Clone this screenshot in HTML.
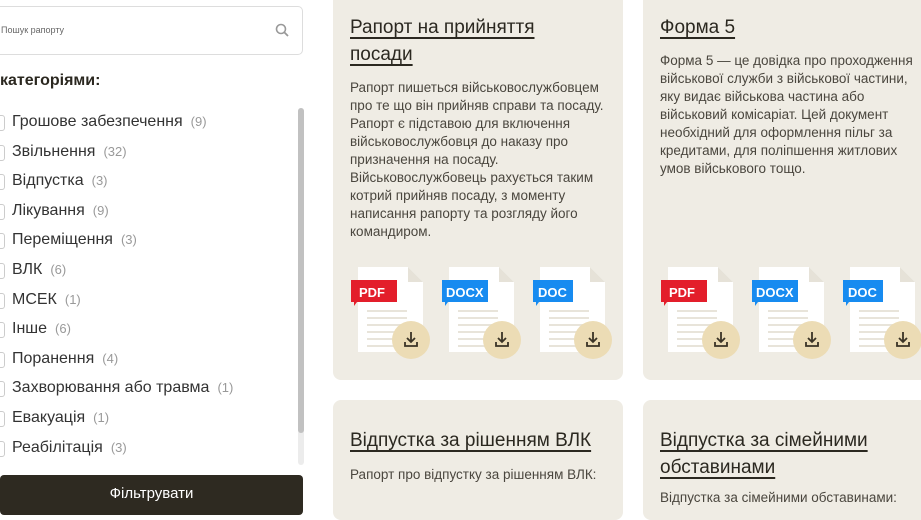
<!DOCTYPE html>
<html><head><meta charset="utf-8"><style>
*{margin:0;padding:0;box-sizing:border-box}
body{width:921px;height:508px;overflow:hidden;background:#fff;font-family:"Liberation Sans","DejaVu Sans",sans-serif;position:relative}
.search{position:absolute;left:-10px;top:6px;width:313px;height:49px;border:1px solid #ddd;border-radius:5px}
.search span{position:absolute;left:10px;top:18px;font-size:9px;color:#666}
.cat{position:absolute;left:0;top:72px;font-size:16px;font-weight:bold;color:#2b2820}
.list{position:absolute;left:0;top:111px}
.it{height:29.6px;font-size:16px;color:#333;position:relative;padding-left:12px;line-height:22px;white-space:nowrap}
.it:before{content:"";position:absolute;left:-10px;top:4px;width:13px;height:14px;border:1px solid #ccc;border-radius:3px}
.it i{font-style:normal;color:#999;font-size:13px;margin-left:8px}
.sb{position:absolute;left:298px;top:108px;width:6px;height:357px;background:#ececec;border-radius:3px}
.sb div{height:325px;background:#c1c1c1;border-radius:3px}
.btn{position:absolute;left:0;top:475px;width:303px;height:40px;background:#2e2a21;border-radius:4px;color:#fff;font-size:15px;text-align:center;line-height:38px}
.card{position:absolute;background:#efece4;border-radius:8px}
.t{position:absolute;font-size:19px;line-height:26.5px;color:#2b2820}
.t span{text-decoration:underline;text-decoration-thickness:2px;text-underline-offset:4px}
.p{position:absolute;font-size:13.5px;line-height:18px;color:#4a463e}
.f{position:absolute;top:266px;width:80px;height:87px;overflow:visible}
</style></head><body>
<div class="search"><span>Пошук рапорту</span>
<svg style="position:absolute;left:284px;top:16px" width="14" height="14" viewBox="0 0 14 14"><circle cx="6" cy="6" r="4.5" fill="none" stroke="#999" stroke-width="1.6"/><path d="M9.5 9.5L13 13" stroke="#999" stroke-width="1.8"/></svg></div>
<div class="cat">категоріями:</div>
<div class="list">
<div class="it">Грошове забезпечення<i>(9)</i></div>
<div class="it">Звільнення<i>(32)</i></div>
<div class="it">Відпустка<i>(3)</i></div>
<div class="it">Лікування<i>(9)</i></div>
<div class="it">Переміщення<i>(3)</i></div>
<div class="it">ВЛК<i>(6)</i></div>
<div class="it">МСЕК<i>(1)</i></div>
<div class="it">Інше<i>(6)</i></div>
<div class="it">Поранення<i>(4)</i></div>
<div class="it">Захворювання або травма<i>(1)</i></div>
<div class="it">Евакуація<i>(1)</i></div>
<div class="it">Реабілітація<i>(3)</i></div>
</div>
<div class="sb"><div></div></div>
<div class="btn">Фільтрувати</div>

<div class="card" style="left:333px;top:-10px;width:290px;height:390px"></div>
<div class="card" style="left:643px;top:-10px;width:290px;height:390px"></div>
<div class="card" style="left:333px;top:400px;width:290px;height:120px"></div>
<div class="card" style="left:643px;top:400px;width:290px;height:120px"></div>

<div class="t" style="left:350px;top:15px"><span>Рапорт на прийняття</span><br><span>посади</span></div>
<div class="p" style="left:350px;top:79px;width:260px">Рапорт пишеться військовослужбовцем про те що він прийняв справи та посаду. Рапорт є підставою для включення військовослужбовця до наказу про призначення на посаду. Військовослужбовець рахується таким котрий прийняв посаду, з моменту написання рапорту та розгляду його командиром.</div>
<div class="t" style="left:660px;top:15px"><span>Форма 5</span></div>
<div class="p" style="left:660px;top:52px;width:256px">Форма 5 — це довідка про проходження військової служби з військової частини, яку видає військова частина або військовий комісаріат. Цей документ необхідний для оформлення пільг за кредитами, для поліпшення житлових умов військового тощо.</div>
<div class="t" style="left:350px;top:428px"><span>Відпустка за рішенням ВЛК</span></div>
<div class="p" style="left:350px;top:466px">Рапорт про відпустку за рішенням ВЛК:</div>
<div class="t" style="left:660px;top:428px"><span>Відпустка за сімейними</span><br><span>обставинами</span></div>
<div class="p" style="left:660px;top:489px">Відпустка за сімейними обставинами:</div>

<svg width="0" height="0" style="position:absolute"><defs>
<g id="pg"><path d="M7 1h50l15 15v70H7z" fill="#fff"/><path d="M57 1v15h15z" fill="#e6e2d8"/>
<g stroke="#e8e4da" stroke-width="2"><path d="M16 45h40M16 52h40M16 59h40M16 66h40M16 73h40M16 80h40"/></g>
<circle cx="60" cy="74" r="19" fill="#ecdcb5"/>
<path d="M60 66v10M56 72l4 4 4-4M54 76v4h12v-4" fill="none" stroke="#3a3326" stroke-width="1.8"/></g>
</defs></svg>
<svg class="f" style="left:351px" viewBox="0 0 80 87"><use href="#pg"/><path d="M0 14h46v22H6l-3 4v-4H0z" fill="#e31e2b"/><text x="8" y="31" font-size="13" font-weight="bold" fill="#fff" font-family="Liberation Sans">PDF</text></svg>
<svg class="f" style="left:442px" viewBox="0 0 80 87"><use href="#pg"/><path d="M0 14h46v22H6l-3 4v-4H0z" fill="#178bf0"/><text x="4" y="31" font-size="13" font-weight="bold" fill="#fff" font-family="Liberation Sans">DOCX</text></svg>
<svg class="f" style="left:533px" viewBox="0 0 80 87"><use href="#pg"/><path d="M0 14h40v22H6l-3 4v-4H0z" fill="#178bf0"/><text x="5" y="31" font-size="13" font-weight="bold" fill="#fff" font-family="Liberation Sans">DOC</text></svg>
<svg class="f" style="left:661px" viewBox="0 0 80 87"><use href="#pg"/><path d="M0 14h46v22H6l-3 4v-4H0z" fill="#e31e2b"/><text x="8" y="31" font-size="13" font-weight="bold" fill="#fff" font-family="Liberation Sans">PDF</text></svg>
<svg class="f" style="left:752px" viewBox="0 0 80 87"><use href="#pg"/><path d="M0 14h46v22H6l-3 4v-4H0z" fill="#178bf0"/><text x="4" y="31" font-size="13" font-weight="bold" fill="#fff" font-family="Liberation Sans">DOCX</text></svg>
<svg class="f" style="left:843px" viewBox="0 0 80 87"><use href="#pg"/><path d="M0 14h40v22H6l-3 4v-4H0z" fill="#178bf0"/><text x="5" y="31" font-size="13" font-weight="bold" fill="#fff" font-family="Liberation Sans">DOC</text></svg>
</body></html>
